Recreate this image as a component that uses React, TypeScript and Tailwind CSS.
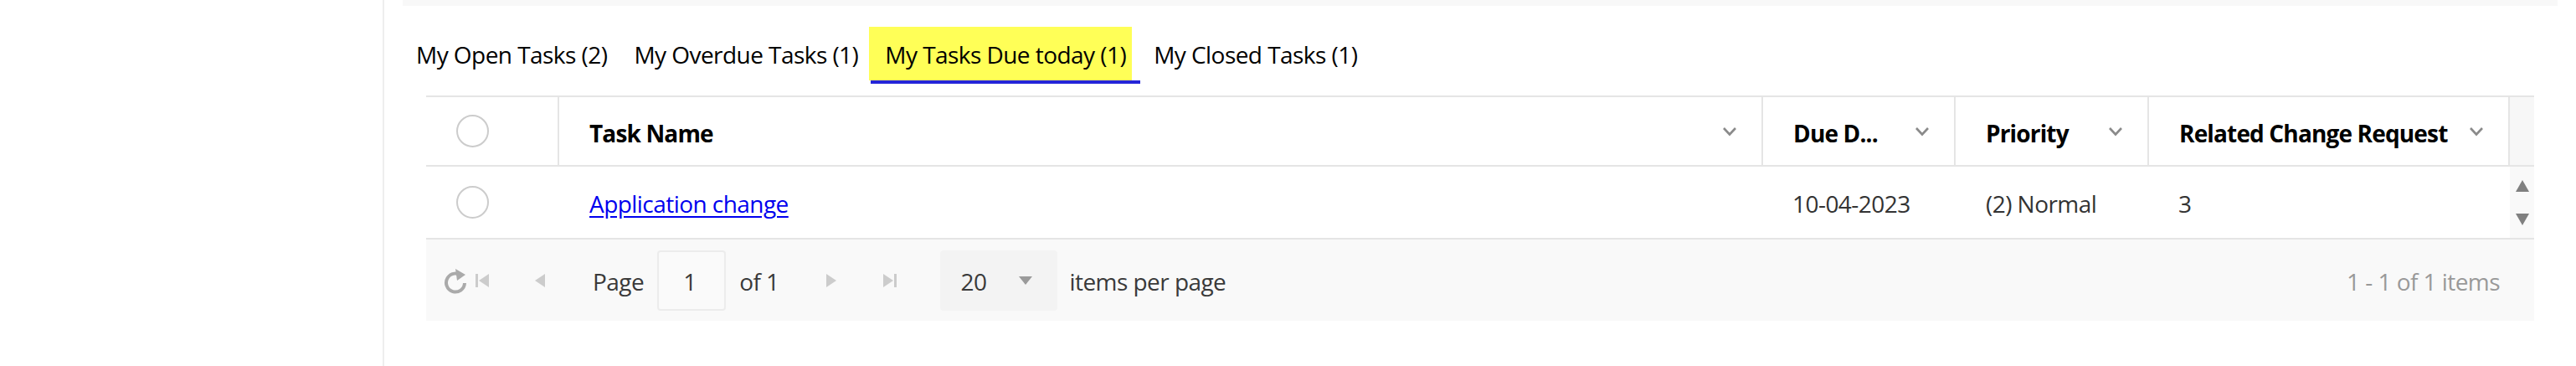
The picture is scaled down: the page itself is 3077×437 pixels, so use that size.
const Chevron = () => (
  <svg width="18" height="12" viewBox="0 0 18 12" className="shrink-0">
    <polyline points="2,2 9,9.5 16,2" fill="none" stroke="#8a8a8a" strokeWidth="2.6" />
  </svg>
);

const Circle = () => (
  <div className="w-[39px] h-[39px] rounded-full border-[2.5px] border-[#cccccc] bg-white" />
);

const Tri = ({ dir, color = "#cccccc" }: { dir: "left" | "right"; color?: string }) => (
  <svg width="14" height="18" viewBox="0 0 14 18">
    {dir === "left" ? (
      <polygon points="13,1 13,17 1,9" fill={color} />
    ) : (
      <polygon points="1,1 1,17 13,9" fill={color} />
    )}
  </svg>
);

const tabs = [
  { label: "My Open Tasks (2)", active: false },
  { label: "My Overdue Tasks (1)", active: false },
  { label: "My Tasks Due today (1)", active: true },
  { label: "My Closed Tasks (1)", active: false },
];

const columns = [
  { label: "Task Name", width: "flex-1" },
  { label: "Due D...", width: "w-[230px]" },
  { label: "Priority", width: "w-[231px]" },
  { label: "Related Change Request", width: "w-[431px]" },
];

export default function App() {
  return (
    <div
      className="flex w-full h-[437px] bg-white text-[28px] tracking-[-0.55px] text-black"
      style={{ fontFamily: '"Open Sans", "Noto Sans", sans-serif' }}
    >
      <aside className="w-[459px] shrink-0 border-r-2 border-[#eeeeee]" />

      <main className="flex-1 flex flex-col px-[22px]">
        <div className="h-[7px] bg-[#f8f8f8]" />

        {/* tabs */}
        <div className="flex items-end mt-[25px] h-[68px]">
          {tabs.map((t) =>
            t.active ? (
              <div key={t.label} className="flex flex-col ml-[-3px]">
                <div className="flex">
                  <span className="h-[64px] flex items-center bg-[#ffff57] pl-[19px] pr-[7px] pt-[2px] leading-none whitespace-nowrap">
                    {t.label}
                  </span>
                  <span className="w-[10px]" />
                </div>
                <div className="h-[4px] bg-[#2525d8] ml-[2px]" />
              </div>
            ) : (
              <div
                key={t.label}
                className="h-[68px] pb-[2px] flex items-center px-[16px] leading-none whitespace-nowrap"
              >
                {t.label}
              </div>
            )
          )}
        </div>

        {/* grid */}
        <div className="mx-[28px] mt-[14px] flex flex-col">
          {/* header */}
          <div className="flex h-[85px] border-y-2 border-[#e5e5e5]">
            <div className="w-[159px] shrink-0 flex items-center pl-[36px] border-r-2 border-[#e5e5e5]">
              <Circle />
            </div>
            {columns.map((c) => (
              <div
                key={c.label}
                className={`${c.width} flex items-center justify-between pl-[36px] pr-[29px] border-r-2 border-[#e5e5e5] font-bold tracking-[-0.85px] whitespace-nowrap`}
              >
                <span className="pt-[4px]">{c.label}</span>
                <Chevron />
              </div>
            ))}
            <div className="w-[29px] shrink-0 bg-[#f7f7f7]" />
          </div>

          {/* row */}
          <div className="flex h-[87px] border-b-2 border-[#e5e5e5] text-[#333333]">
            <div className="w-[159px] shrink-0 flex items-center pl-[36px]">
              <Circle />
            </div>
            <div className="flex-1 flex items-center pl-[36px] pt-[3px]">
              <a href="#" className="text-[#0000ee] underline underline-offset-[4px]">
                Application change
              </a>
            </div>
            <div className="w-[230px] flex items-center pl-[35px] pt-[3px]">10-04-2023</div>
            <div className="w-[231px] flex items-center pl-[36px] pt-[3px]">(2) Normal</div>
            <div className="w-[431px] flex items-center pl-[35px] pt-[3px]">3</div>
            <div className="w-[29px] shrink-0 bg-[#f9f9f9] flex flex-col items-center justify-center gap-[24px]">
              <svg width="18" height="16" viewBox="0 0 18 16">
                <polygon points="9,1 17,15 1,15" fill="#808080" />
              </svg>
              <svg width="18" height="16" viewBox="0 0 18 16">
                <polygon points="1,1 17,1 9,15" fill="#808080" />
              </svg>
            </div>
          </div>

          {/* pager */}
          <div className="flex items-center h-[97px] bg-[#f9f9f9] text-[#3a3a3a] pl-[21px] pr-[41px]">
            <svg width="30" height="34" viewBox="0 0 30 34">
              <path d="M22 12 A11 11 0 1 0 25 20" fill="none" stroke="#aaaaaa" strokeWidth="4" />
              <polygon points="14,3 26,10 16,17" fill="#aaaaaa" />
            </svg>
            <div className="ml-[8px] flex items-center">
              <div className="w-[3px] h-[16px] bg-[#cccccc]" />
              <Tri dir="left" />
            </div>
            <div className="ml-[53px]">
              <Tri dir="left" />
            </div>
            <span className="ml-[56px] pt-[3px]">Page</span>
            <div className="ml-[16px] w-[82px] h-[72px] border-2 border-[#ececec] rounded-[4px] bg-[#fafafa] flex items-center pl-[29px] pt-[3px]">
              1
            </div>
            <span className="ml-[16px] pt-[3px]">of 1</span>
            <div className="ml-[55px]">
              <Tri dir="right" />
            </div>
            <div className="ml-[54px] flex items-center">
              <Tri dir="right" />
              <div className="w-[3px] h-[16px] bg-[#cccccc]" />
            </div>
            <div className="ml-[52px] w-[140px] h-[72px] rounded-[4px] bg-[#f3f3f3] flex items-center pl-[25px]">
              <span className="pt-[3px]">20</span>
              <svg width="18" height="12" viewBox="0 0 18 12" className="ml-[38px]">
                <polygon points="1,1 17,1 9,11" fill="#9a9a9a" />
              </svg>
            </div>
            <span className="ml-[15px] pt-[3px]">items per page</span>
            <span className="ml-auto text-[#999999] pt-[3px]">1 - 1 of 1 items</span>
          </div>
        </div>
      </main>
    </div>
  );
}
